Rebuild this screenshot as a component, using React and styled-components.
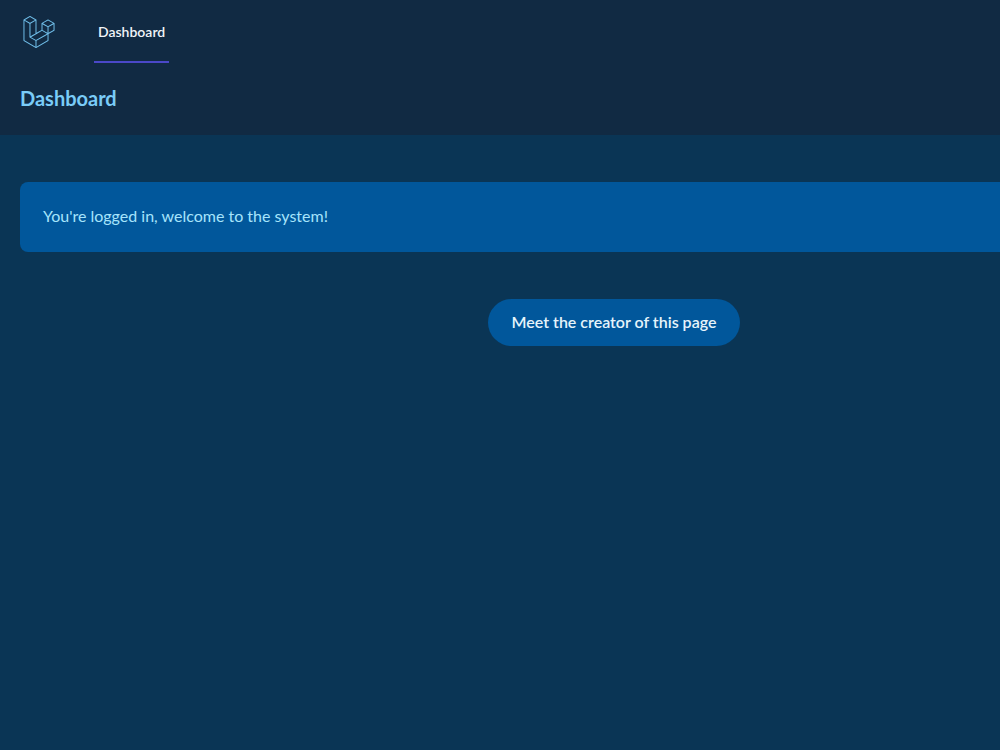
import styled, { createGlobalStyle } from 'styled-components';
import { SiLaravel } from 'react-icons/si';

const GlobalStyle = createGlobalStyle`
  * {
    box-sizing: border-box;
  }
  html {
    background: #0a3555;
  }
  body {
    margin: 0;
    overflow-x: hidden;
    font-family: Lato, 'Liberation Sans', sans-serif;
    font-size: 16px;
    line-height: 24px;
  }
`;

const Page = styled.div`
  min-width: 1228px;
  min-height: 100vh;
  background: #0a3555;
`;

const TopArea = styled.div`
  background: #112a43;
`;

const Nav = styled.nav`
  display: flex;
  height: 63px;
  padding: 0 20px;
  gap: 39px;
`;

const LogoLink = styled.a`
  display: flex;
  align-items: center;
  padding-left: 3px;
  color: #6fbde8;
`;

const NavLink = styled.a`
  display: flex;
  align-items: center;
  padding: 2px 4px 0;
  border-bottom: 2px solid #4b48c8;
  color: #f0f4f8;
  font-size: 14px;
  font-weight: 600;
  text-decoration: none;
`;

const Header = styled.header`
  padding: 23px 20px 25px;
`;

const Title = styled.h1`
  margin: 0;
  color: #7accf8;
  font-size: 20px;
  line-height: 24px;
  font-weight: 700;
`;

const Main = styled.main`
  display: flex;
  flex-direction: column;
  align-items: center;
  gap: 47px;
  padding: 47px 20px;
`;

const Card = styled.section`
  width: 100%;
  padding: 22px 23px 24px;
  border-radius: 8px;
  background: #01579b;
  color: #a6e4fb;
`;

const CardText = styled.p`
  margin: 0;
`;

const CreatorLink = styled.a`
  padding: 11px 24px 12px;
  border-radius: 24px;
  background: #01579b;
  color: #e6f4fb;
  font-weight: 600;
  text-decoration: none;
`;

function App() {
  return (
    <Page>
      <GlobalStyle />
      <TopArea>
        <Nav>
          <LogoLink href="#" aria-label="Home">
            <SiLaravel size={32} />
          </LogoLink>
          <NavLink href="#dashboard">Dashboard</NavLink>
        </Nav>
        <Header>
          <Title>Dashboard</Title>
        </Header>
      </TopArea>
      <Main>
        <Card>
          <CardText>You're logged in, welcome to the system!</CardText>
        </Card>
        <CreatorLink href="#creator">Meet the creator of this page</CreatorLink>
      </Main>
    </Page>
  );
}

export default App;
